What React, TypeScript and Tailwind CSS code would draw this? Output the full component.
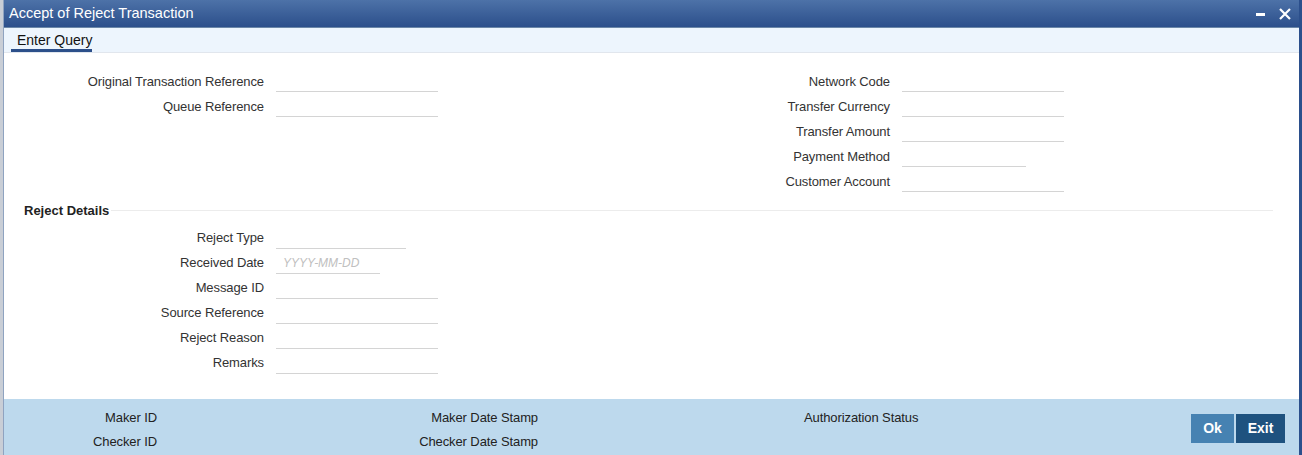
import React from 'react';

type Field = { label: string; width: string; placeholder?: string };

const leftFields: Field[] = [
  { label: 'Original Transaction Reference', width: 'w-[162px]' },
  { label: 'Queue Reference', width: 'w-[162px]' },
];

const rightFields: Field[] = [
  { label: 'Network Code', width: 'w-[162px]' },
  { label: 'Transfer Currency', width: 'w-[162px]' },
  { label: 'Transfer Amount', width: 'w-[162px]' },
  { label: 'Payment Method', width: 'w-[124px]' },
  { label: 'Customer Account', width: 'w-[162px]' },
];

const rejectFields: Field[] = [
  { label: 'Reject Type', width: 'w-[130px]' },
  { label: 'Received Date', width: 'w-[104px]', placeholder: 'YYYY-MM-DD' },
  { label: 'Message ID', width: 'w-[162px]' },
  { label: 'Source Reference', width: 'w-[162px]' },
  { label: 'Reject Reason', width: 'w-[162px]' },
  { label: 'Remarks', width: 'w-[162px]' },
];

const FieldRow: React.FC<{ field: Field; labelWidth: string }> = ({ field, labelWidth }) => (
  <div className="flex items-center h-[25px]">
    <label className={`${labelWidth} shrink-0 whitespace-nowrap text-right pr-3 text-[13px] tracking-[-0.1px] text-[#333]`}>
      {field.label}
    </label>
    <div className={`${field.width} h-[21px] border-b border-[#d4d4d4] flex items-center px-[7px]`}>
      {field.placeholder && (
        <span className="text-[12px] italic text-[#c0c0c0]">{field.placeholder}</span>
      )}
    </div>
  </div>
);

const App: React.FC = () => {
  return (
    <div
      className="w-[1302px] h-[455px] overflow-hidden bg-[#c9ced6] pl-[3px]"
      style={{ fontFamily: '"Liberation Sans", Arial, sans-serif' }}
    >
      <div className="h-full flex flex-col bg-white border-l border-[#8fa3c0] border-r-[3px] border-r-[#2b4f8c]">
        {/* title bar */}
        <div className="h-[28px] shrink-0 flex items-center justify-between pl-[5px] pr-[8px] bg-gradient-to-b from-[#4d72a8] to-[#2c4f8b] border-b border-[#6b87a8]">
          <span className="text-white text-[14.5px]">Accept of Reject Transaction</span>
          <div className="flex items-center gap-[14px] text-white">
            <span className="block w-[9px] h-[3px] bg-white mt-[1px]" />
            <svg width="12" height="12" viewBox="0 0 12 12">
              <path d="M1 1 L11 11 M11 1 L1 11" stroke="white" strokeWidth="2.2" />
            </svg>
          </div>
        </div>

        {/* toolbar */}
        <div className="h-[25px] shrink-0 bg-[#edf5fd] border-b border-[#e1e6ed] pl-[7px]">
          <div className="w-[81px] flex flex-col">
            <span className="h-[21px] pt-[3px] leading-[18px] text-[14px] text-[#111] pl-[6px] whitespace-nowrap">Enter Query</span>
            <span className="block h-[3px] w-[81px] bg-[#2c4f8a]" />
          </div>
        </div>

        {/* main form */}
        <div className="flex-1 pt-[16px]">
          <div className="flex">
            <div className="w-[700px] flex flex-col">
              {leftFields.map((f) => (
                <FieldRow key={f.label} field={f} labelWidth="w-[272px]" />
              ))}
            </div>
            <div className="flex flex-col">
              {rightFields.map((f) => (
                <FieldRow key={f.label} field={f} labelWidth="w-[198px]" />
              ))}
            </div>
          </div>

          <div className="flex items-center mt-[7px] pl-[20px] pr-[26px]">
            <span className="text-[13px] font-bold text-[#222] pr-[2px]">Reject Details</span>
            <span className="flex-1 h-px bg-[#ececec]" />
          </div>

          <div className="flex flex-col mt-[5px]">
            {rejectFields.map((f) => (
              <FieldRow key={f.label} field={f} labelWidth="w-[272px]" />
            ))}
          </div>
        </div>

        {/* footer */}
        <div className="h-[56px] shrink-0 bg-[#bdd9ed] flex items-start pt-[11px] text-[13px] tracking-[-0.1px] leading-[15px] text-[#222]">
          <div className="w-[153px] flex flex-col items-end gap-[9px]">
            <span>Maker ID</span>
            <span>Checker ID</span>
          </div>
          <div className="w-[381px] flex flex-col items-end gap-[9px]">
            <span>Maker Date Stamp</span>
            <span>Checker Date Stamp</span>
          </div>
          <div className="flex flex-col pl-[266px]">
            <span>Authorization Status</span>
          </div>
          <div className="ml-auto mr-[14px] mt-[4px] flex gap-[2px] tracking-normal">
            <button className="w-[43px] h-[29px] bg-[#4682b2] text-white font-bold text-[14px]">Ok</button>
            <button className="w-[49px] h-[29px] bg-[#1e527f] text-white font-bold text-[14px]">Exit</button>
          </div>
        </div>
      </div>
    </div>
  );
};

export default App;
